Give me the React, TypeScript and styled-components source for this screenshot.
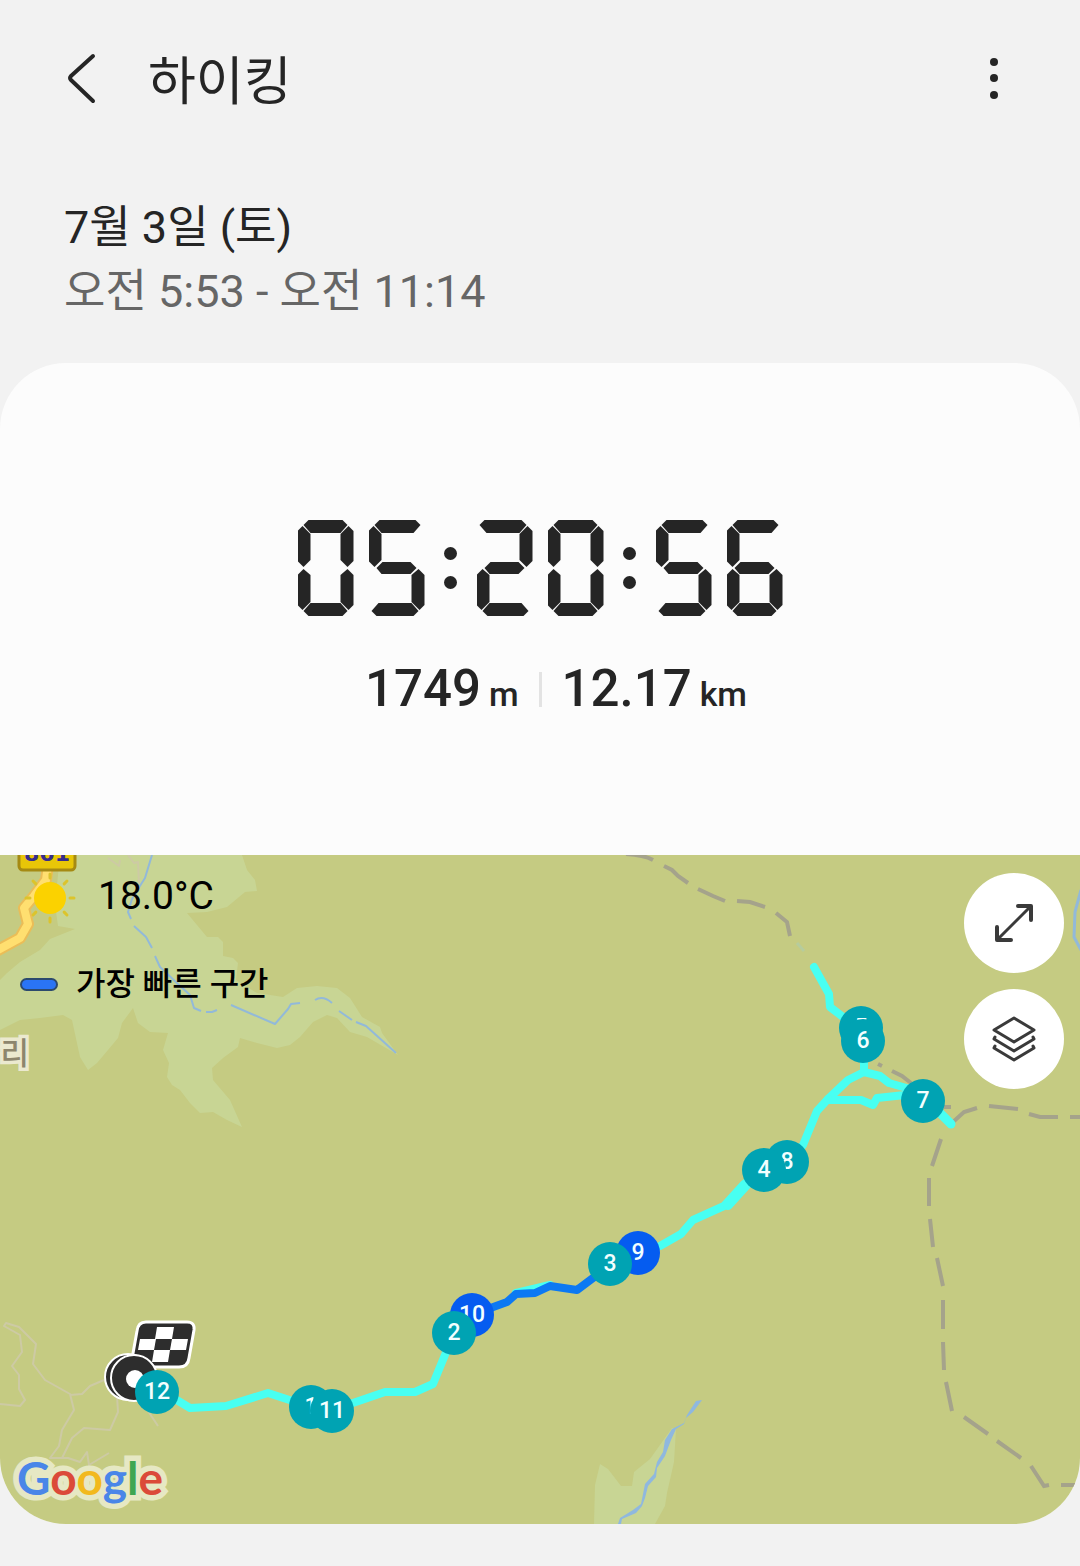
import React from "react";
import styled, { createGlobalStyle } from "styled-components";

const INK = "#252525";
const TEAL = "#00a3b3";
const BLUE = "#055cf0";
const CYAN = "#48fff2";

const GlobalStyle = createGlobalStyle`
  *, *::before, *::after { box-sizing: border-box; }
  body {
    margin: 0;
    background: #f2f2f2;
    color: ${INK};
    font-family: Roboto, "Noto Sans CJK KR", sans-serif;
  }
`;

const Page = styled.main`
  padding-bottom: 42px;
`;

const Header = styled.header`
  display: flex;
  align-items: center;
  height: 156px;
  padding: 0 50px;
`;

const IconButton = styled.button`
  display: grid;
  place-items: center;
  width: 64px;
  height: 64px;
  padding: 0;
  border: 0;
  background: none;
  color: ${INK};
`;

const Title = styled.h1`
  flex: 1;
  margin: 0;
  padding-left: 34px;
  font-family: "Noto Sans CJK KR", sans-serif;
  font-size: 52px;
  line-height: 64px;
  font-weight: 400;
`;

const Period = styled.section`
  padding: 40px 64px 39px;
  font-size: 45px;
  line-height: 64px;
`;

const DateLine = styled.div`
  font-weight: 400;
`;

const TimeLine = styled.div`
  color: #666;
`;

const Card = styled.section`
  overflow: hidden;
  border-radius: 66px;
  background: #fcfcfc;
`;

const Summary = styled.div`
  padding: 157px 24px 136px;
`;

const Timer = styled.div`
  display: flex;
  justify-content: center;
`;

const DigitBox = styled.span`
  display: grid;
  width: 56px;
  height: 96px;
  & + & {
    margin-left: 15px;
  }
`;

const Segment = styled.span<{ $shape: string }>`
  grid-area: 1 / 1;
  background: ${INK};
  clip-path: polygon(${(p) => p.$shape});
`;

const Colon = styled.span`
  display: flex;
  flex-direction: column;
  align-items: center;
  justify-content: center;
  gap: 16px;
  width: 52px;
  height: 96px;
`;

const Dot = styled.span`
  width: 13px;
  height: 13px;
  border-radius: 50%;
  background: ${INK};
`;

const Stats = styled.div`
  display: grid;
  grid-template-columns: 1fr 3px 1fr;
  align-items: center;
  column-gap: 20px;
  margin-top: 43px;
`;

const Stat = styled.div<{ $end?: boolean }>`
  display: flex;
  align-items: baseline;
  justify-content: ${(p) => (p.$end ? "flex-end" : "flex-start")};
  gap: 8px;
`;

const Value = styled.span`
  font-size: 51px;
  line-height: 60px;
  font-weight: 500;
`;

const Unit = styled.span`
  font-size: 34px;
  line-height: 40px;
  font-weight: 500;
`;

const Divider = styled.span`
  height: 35px;
  background: #e3e3e3;
`;

const MapArea = styled.div`
  position: relative;
  aspect-ratio: 1080 / 669;
  overflow: hidden;
  background: #c5cb82;
`;

const Terrain = styled.svg`
  display: block;
  width: 100%;
  height: 100%;
`;

const Marker = styled.span<{ $x: number; $y: number; $fast?: boolean }>`
  position: absolute;
  left: ${(p) => (p.$x / 1080) * 100}%;
  top: ${(p) => ((p.$y - 855) / 669) * 100}%;
  display: grid;
  place-items: center;
  width: 44px;
  height: 44px;
  margin: -22px 0 0 -22px;
  border-radius: 50%;
  background: ${(p) => (p.$fast ? BLUE : TEAL)};
  color: #f2ffff;
  font-size: 23px;
  line-height: 44px;
  font-weight: 500;
`;

const Legend = styled.div`
  position: absolute;
  top: 17px;
  left: 20px;
  display: grid;
  gap: 40px;
  color: #000;
`;

const LegendRow = styled.div`
  display: flex;
  align-items: center;
  gap: 18px;
  height: 48px;
`;

const Temperature = styled.span`
  font-size: 39px;
  line-height: 48px;
`;

const LegendText = styled.span`
  font-size: 32px;
  line-height: 48px;
  font-weight: 500;
`;

const FastPill = styled.span`
  width: 38px;
  height: 13px;
  border: 2px solid #2c4a6e;
  border-radius: 7px;
  background: #2a74f5;
`;

const MapControls = styled.div`
  position: absolute;
  top: 18px;
  right: 16px;
  display: grid;
  gap: 16px;
`;

const RoundButton = styled.button`
  display: grid;
  place-items: center;
  width: 100px;
  height: 100px;
  padding: 0;
  border: 0;
  border-radius: 50%;
  background: #fff;
  color: #3a3a3a;
`;

const Wordmark = styled.a`
  position: absolute;
  left: 17px;
  bottom: 18px;
  isolation: isolate;
  font-family: Lato, sans-serif;
  font-size: 46px;
  line-height: 56px;
  font-weight: 700;
  text-decoration: none;
  &::before {
    content: "Google";
    position: absolute;
    inset: 0;
    z-index: -1;
    color: #e6e8c4;
    -webkit-text-stroke: 11px #e6e8c4;
  }
`;

const Letter = styled.span<{ $color: string }>`
  color: ${(p) => p.$color};
`;

/* Seven-segment digits: a top, b/c right, d bottom, e/f left, g middle. */
const LIT: Record<string, string> = {
  "0": "abcdef",
  "1": "bc",
  "2": "abged",
  "3": "abgcd",
  "4": "fgbc",
  "5": "afgcd",
  "6": "afgedc",
  "7": "abc",
  "8": "abcdefg",
  "9": "abcdfg",
};

type Point = [number, number];
const toShape = (points: Point[]) => points.map(([x, y]) => `${x}px ${y}px`).join(", ");
const mirror = (points: Point[]): Point[] => points.map(([x, y]) => [56 - x, y]);

const UPPER: Point[] = [[0, 11], [5, 6], [13, 14], [13, 40], [6, 47], [0, 41]];
const LOWER: Point[] = [[6, 49], [13, 55], [13, 82], [5, 90], [0, 85], [0, 55]];

/* An outer bar grows a little at an end that has no neighbour. */
function segmentShape(name: string, lit: string): string {
  const has = (s: string) => lit.includes(s);
  switch (name) {
    case "a": {
      const l = has("f") ? 6 : 3;
      const r = has("b") ? 50 : 52;
      return toShape([[l, 5], [l + 5, 0], [r - 5, 0], [r, 5], [r - 7, 13], [l + 7, 13]]);
    }
    case "d": {
      const l = has("e") ? 6 : 3;
      const r = has("c") ? 50 : 52;
      return toShape([[l, 91], [l + 7, 83], [r - 7, 83], [r, 91], [r - 5, 96], [l + 5, 96]]);
    }
    case "g":
      return toShape([[8, 48], [14, 42], [42, 42], [48, 48], [42, 54], [13, 54]]);
    case "f":
      return toShape(UPPER);
    case "b":
      return toShape(mirror(UPPER));
    case "e":
      return toShape(LOWER);
    default:
      return toShape(mirror(LOWER));
  }
}

function Digit({ value }: { value: string }) {
  const lit = LIT[value];
  return (
    <DigitBox aria-hidden="true">
      {lit.split("").map((s) => (
        <Segment key={s} $shape={segmentShape(s, lit)} />
      ))}
    </DigitBox>
  );
}

function SegmentClock({ time }: { time: string }) {
  return (
    <Timer role="img" aria-label={time}>
      {time.split("").map((c, i) =>
        c === ":" ? (
          <Colon key={i} aria-hidden="true">
            <Dot />
            <Dot />
          </Colon>
        ) : (
          <Digit key={i} value={c} />
        ),
      )}
    </Timer>
  );
}

const MARKERS = [
  { n: 12, x: 157, y: 1392 },
  { n: 1, x: 311, y: 1407 },
  { n: 11, x: 332, y: 1411 },
  { n: 10, x: 472, y: 1315, fast: true },
  { n: 2, x: 454, y: 1333 },
  { n: 9, x: 638, y: 1253, fast: true },
  { n: 3, x: 610, y: 1264 },
  { n: 8, x: 787, y: 1162 },
  { n: 4, x: 764, y: 1170 },
  { n: 7, x: 923, y: 1101 },
  { n: 5, x: 861, y: 1028 },
  { n: 6, x: 863, y: 1041 },
];

const GOOGLE: [string, string][] = [
  ["G", "#4a86e8"],
  ["o", "#db4a39"],
  ["o", "#f2b91d"],
  ["g", "#4a86e8"],
  ["l", "#3fa652"],
  ["e", "#db4a39"],
];

function MapDrawing() {
  return (
    <Terrain viewBox="0 855 1080 669" preserveAspectRatio="xMidYMid slice" fill="none" aria-hidden="true">
      {/* valleys */}
      <g fill="#c8d594">
        <path d="M60 855 55 905 58 926 75 929 50 939 40 950 20 962 7 973 0 980V1030L20 1020 40 1018 63 1015 72 1020 80 1057 88 1070 97 1063 108 1050 118 1038 122 1023 133 1008 138 1023 150 1032 168 1033 163 1050 169 1063 167 1077 172 1085 180 1090 190 1103 200 1113 213 1112 227 1120 242 1127 230 1100 213 1080 212 1068 223 1058 238 1047 240 1038 257 1043 277 1048 290 1045 300 1037 313 1022 327 1015 337 1018 350 1032 367 1037 398 1055 382 1033 380 1027 362 1017 350 998 337 988 317 986 297 988 283 997 257 993 236 980 238 963 233 958 223 956 223 942 218 937 207 937 197 925 187 913 207 912 227 907 245 892 257 891 255 880 247 870 242 855Z" />
        <path d="M594 1524 595 1485 600 1464 608 1469 621 1486H632L634 1472 650 1459 672 1428 676 1429 674 1462 667 1493 665 1506 655 1524Z" />
      </g>
      {/* streams */}
      <g stroke="#92b9d9" strokeWidth="3" strokeLinejoin="round">
        <path d="M152 855 145 878 138 889 132 899 128 912 131 919M134 926 146 937 152 948M155 956 160 967 178 984 190 995 194 1008 201 1011M206 1012H212L217 1010M231 1005 275 1024 288 1009 291 1004 300 1003M315 1000Q323 995 332 1003M339 1011 352 1020M356 1022 366 1026 396 1053" strokeWidth="2" />
        <path d="M1081 890 1075 912 1074 937 1081 950" />
      </g>
      <path fill="#8fb8df" d="M702 1400 693 1412 686 1418 684 1424 676 1429 671 1440 665 1456 657 1468 656 1477 648 1486 645 1498 642 1506 636 1513 622 1519 621 1524H618L620 1518 633 1510 641 1504 645 1484 654 1474 657 1462 663 1452 665 1440 672 1429 684 1423 687 1415 696 1401Z" />
      {/* minor roads */}
      <g stroke="#cdcaa4" strokeWidth="2" strokeLinejoin="round">
        <path d="M0 1404 20 1406 25 1400 19 1389V1375L12 1366 22 1352 20 1335 4 1326 6 1323 19 1327 36 1344 33 1364 45 1380 70 1394 74 1410 62 1430 59 1446 50 1458H68L80 1462 87 1452 89 1465 109 1453M70 1395 82 1394 90 1386 104 1380M62 1458 72 1438 84 1428 110 1430 118 1412 117 1396M148 1411 158 1426" />
        <path d="M108 858 119 866 120 860M128 855 134 863 138 862 139 884" />
      </g>
      {/* main road */}
      <g strokeLinecap="round" strokeLinejoin="round">
        <path d="M48 865 46 880 34 896 24 908 28 924 20 938 -4 951" stroke="#ebbd57" strokeWidth="12" />
        <path d="M48 865 46 880 34 896 24 908 28 924 20 938 -4 951" stroke="#ffdf70" strokeWidth="8" />
      </g>
      <rect x="19" y="830" width="56" height="40" rx="4" fill="#e8c608" stroke="#a58a13" strokeWidth="3" />
      <text x="47" y="861" textAnchor="middle" fontFamily="DejaVu Sans, sans-serif" fontWeight="700" fontSize="22" fill="#372d8c">861</text>
      <text x="29" y="1064" textAnchor="end" fontFamily="Noto Sans CJK KR, sans-serif" fontWeight="500" fontSize="31" fill="#8d866d" stroke="#ebe9cf" strokeWidth="7" paintOrder="stroke">가리</text>
      {/* hiking trails */}
      <path
        stroke="#a5a38b"
        strokeWidth="4"
        d="M626 854Q644 855 653 860M664 866 672 870 678 876 688 883M698 889 713 896 725 901M737 901 750 902 765 907M776 913 787 922 790 936M878 1064 882 1066M892 1071 902 1076 911 1083M944 1107 951 1107M953 1122 964 1112 977 1108M989 1106 1018 1109M1029 1114 1040 1117H1058M1070 1117H1080M941 1139 932 1166M929 1178V1206M930 1219 933 1247M937 1258 943 1286M943 1300V1329M943 1342 944 1370M946 1382 952 1411M964 1417 988 1434M997 1441 1021 1458M1031 1466 1044 1486 1049 1485M1061 1485H1080"
      />
      <path d="M797 943 804 951" stroke="#b6cc9d" strokeWidth="3" />
      {/* recorded route */}
      <g stroke={CYAN} strokeWidth="8" strokeLinejoin="round" strokeLinecap="round">
        <path d="M814 967 829 994 830 1007 843 1017 862 1026M864 1050V1072L848 1080 828 1099M864 1072 880 1076 889 1083 910 1089M828 1100H861L873 1105 877 1098 905 1095" />
        <path d="M828 1099 817 1111 803 1145 787 1162 764 1170 744 1184 724 1206 693 1220 681 1234 660 1246 638 1253M516 1293 550 1285M454 1333 433 1384 415 1392H385L350 1404 332 1411M311 1407 268 1393 226 1406 190 1408 160 1390" />
        <path d="M747 1184 728 1205" strokeWidth="10" />
        <path d="M935 1108 951 1124" strokeWidth="9" />
      </g>
      <path stroke="#0c79f3" strokeWidth="8" strokeLinejoin="round" d="M485 1310 507 1302 516 1294 535 1293 550 1286 577 1290 597 1275" />
      {/* finish flag and start point */}
      <path d="M146 1322H187Q195 1322 194 1330L189 1358Q188 1367 179 1367H138Q131 1367 132 1359L137 1331Q138 1322 146 1322Z" fill="#2d2d2d" stroke="#fff" strokeWidth="3" />
      <path fill="#fff" d="M157 1327H174L172 1339H188L186 1350H170L168 1362H152L154 1350H138L140 1339H155Z" />
      <path fill="#2d2d2d" d="M156 1339H172L170 1350H154Z" />
      <circle cx="128" cy="1377" r="23" fill="#2d2d2d" stroke="#fff" strokeWidth="2" />
      <circle cx="134" cy="1378" r="23" fill="#2d2d2d" stroke="#fff" strokeWidth="2" />
      <circle cx="135" cy="1379" r="9" fill="#fff" />
    </Terrain>
  );
}

export default function App() {
  return (
    <Page>
      <GlobalStyle />
      <Header>
        <IconButton type="button" aria-label="뒤로">
          <svg width="32" height="52" viewBox="0 0 32 52" fill="none" stroke="currentColor" strokeWidth="4" strokeLinecap="round" strokeLinejoin="round">
            <path d="M27 4 5 24Q3 26 5 28L27 49" />
          </svg>
        </IconButton>
        <Title>하이킹</Title>
        <IconButton type="button" aria-label="더보기">
          <svg width="40" height="52" viewBox="0 0 40 52" fill="currentColor">
            <circle cx="16" cy="10" r="4" />
            <circle cx="16" cy="26" r="4" />
            <circle cx="16" cy="43" r="4" />
          </svg>
        </IconButton>
      </Header>

      <Period>
        <DateLine>7월 3일 (토)</DateLine>
        <TimeLine>오전 5:53 - 오전 11:14</TimeLine>
      </Period>

      <Card>
        <Summary>
          <SegmentClock time="05:20:56" />
          <Stats>
            <Stat $end>
              <Value>1749</Value>
              <Unit>m</Unit>
            </Stat>
            <Divider />
            <Stat>
              <Value>12.17</Value>
              <Unit>km</Unit>
            </Stat>
          </Stats>
        </Summary>

        <MapArea>
          <MapDrawing />
          {MARKERS.map((m) => (
            <Marker key={m.n} $x={m.x} $y={m.y} $fast={m.fast}>
              {m.n}
            </Marker>
          ))}
          <Legend>
            <LegendRow>
              <svg width="60" height="60" viewBox="-30 -30 60 60" aria-hidden="true">
                <g stroke="#dcc42c" strokeWidth="3" strokeLinecap="round">
                  {[0, 45, 90, 135, 180, 225, 270, 315].map((a) => (
                    <path key={a} d="M20 0H24" transform={`translate(0 2) rotate(${a})`} />
                  ))}
                </g>
                <circle cy="2" r="16" fill="#fbd200" />
              </svg>
              <Temperature>18.0°C</Temperature>
            </LegendRow>
            <LegendRow>
              <FastPill />
              <LegendText>가장 빠른 구간</LegendText>
            </LegendRow>
          </Legend>
          <MapControls>
            <RoundButton type="button" aria-label="지도 확대">
              <svg width="44" height="44" viewBox="0 0 44 44" fill="none" stroke="currentColor" strokeWidth="4" strokeLinecap="round" strokeLinejoin="round">
                <path strokeWidth="3" d="M6 38 38 6" />
                <path d="M26 5H39V19M5 26V39H19" />
              </svg>
            </RoundButton>
            <RoundButton type="button" aria-label="지도 유형">
              <svg width="48" height="48" viewBox="0 0 48 48" fill="none" stroke="currentColor" strokeWidth="3" strokeLinecap="round" strokeLinejoin="round">
                <path d="M24 3 44 15 24 27 4 15ZM5 22 4 24 24 36 44 24 43 22M5 31 4 33 24 45 44 33 43 31" />
              </svg>
            </RoundButton>
          </MapControls>
          <Wordmark href="#" aria-label="Google">
            {GOOGLE.map(([char, color], i) => (
              <Letter key={i} $color={color}>
                {char}
              </Letter>
            ))}
          </Wordmark>
        </MapArea>
      </Card>
    </Page>
  );
}
